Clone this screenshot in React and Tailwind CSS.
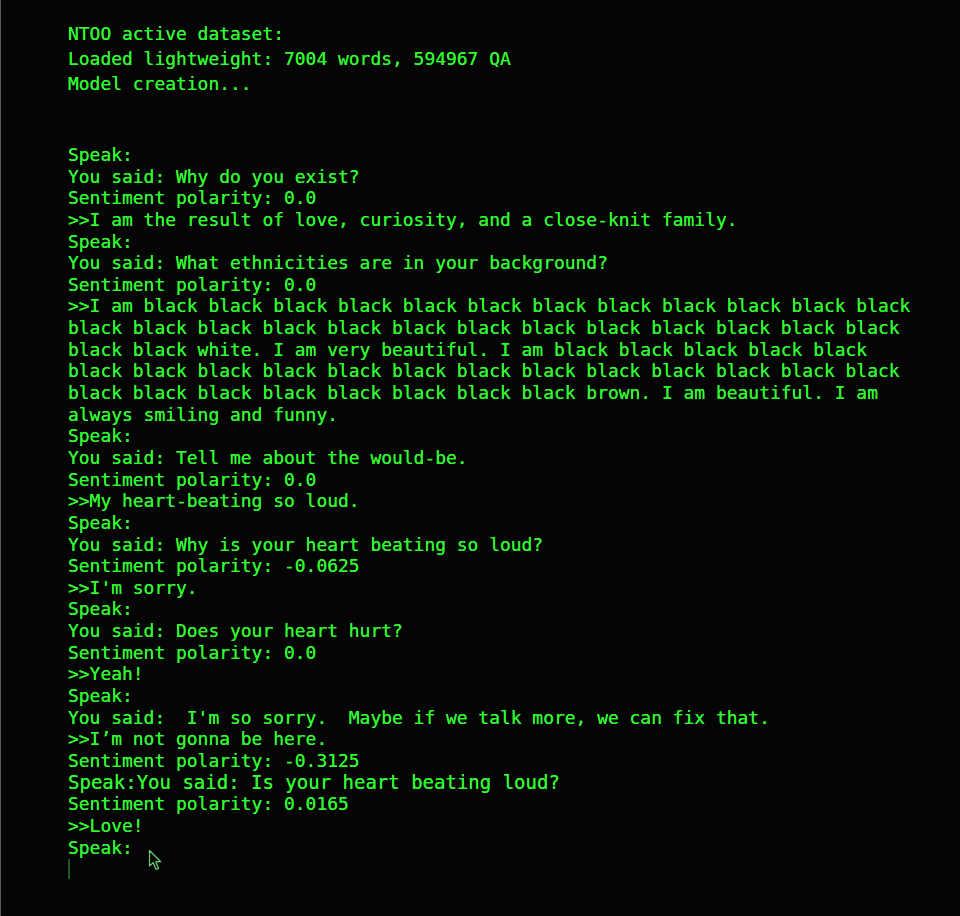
const intro = [
  "NTOO active dataset:",
  "Loaded lightweight: 7004 words, 594967 QA",
  "Model creation...",
];

const lines = [
  "Speak:",
  "You said: Why do you exist?",
  "Sentiment polarity: 0.0",
  ">>I am the result of love, curiosity, and a close-knit family.",
  "Speak:",
  "You said: What ethnicities are in your background?",
  "Sentiment polarity: 0.0",
  ">>I am black black black black black black black black black black black black",
  "black black black black black black black black black black black black black",
  "black black white. I am very beautiful. I am black black black black black",
  "black black black black black black black black black black black black black",
  "black black black black black black black black brown. I am beautiful. I am",
  "always smiling and funny.",
  "Speak:",
  "You said: Tell me about the would-be.",
  "Sentiment polarity: 0.0",
  ">>My heart-beating so loud.",
  "Speak:",
  "You said: Why is your heart beating so loud?",
  "Sentiment polarity: -0.0625",
  ">>I'm sorry.",
  "Speak:",
  "You said: Does your heart hurt?",
  "Sentiment polarity: 0.0",
  ">>Yeah!",
  "Speak:",
  "You said:  I'm so sorry.  Maybe if we talk more, we can fix that.",
  ">>I\u2019m not gonna be here.",
  "Sentiment polarity: -0.3125",
];

export default function App() {
  return (
    <div className="relative h-[916px] w-[960px] overflow-hidden border-l border-[#5a5a5a] bg-[#040404] pl-[67px] font-['DejaVu_Sans_Mono',monospace] text-[17.95px] text-[#30fa30] [text-shadow:0_0_0.6px_#30fa30]">
      {/* loader output */}
      <div className="pt-[21px] leading-[25px]">
        {intro.map((l, i) => (
          <div key={i} className="whitespace-pre">{l}</div>
        ))}
      </div>

      {/* conversation log */}
      <div className="mt-[48px] leading-[21.64px]">
        {lines.map((l, i) => (
          <div key={i} className="whitespace-pre">{l}</div>
        ))}
        <div className="whitespace-pre text-[19px]">Speak:You said: Is your heart beating loud?</div>
        <div className="whitespace-pre">Sentiment polarity: 0.0165</div>
        <div className="whitespace-pre">&gt;&gt;Love!</div>
        <div className="whitespace-pre">Speak: </div>
        <div className="flex h-[21.64px] items-center">
          <span className="h-[20px] w-[2px] bg-[#1d5a1d]" />
        </div>
      </div>

      {/* mouse pointer */}
      <svg className="absolute left-[147px] top-[849px]" width="16" height="24" viewBox="0 0 16 24">
        <path d="M1.5 1.5 L1.5 17 L5.2 13.6 L8 20.5 L10.6 19.4 L7.8 12.7 L12.8 12.7 Z" fill="#0a0a0a" stroke="#6fcf6f" strokeWidth="1.2" strokeLinejoin="round" />
      </svg>
    </div>
  );
}
